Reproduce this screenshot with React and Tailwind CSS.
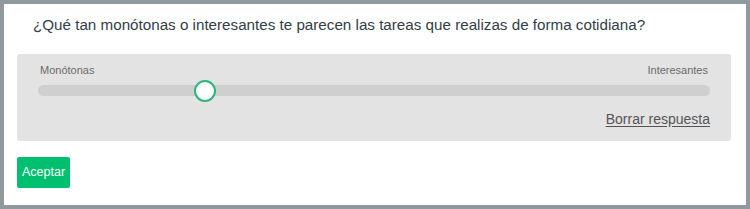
export default function App() {
  const value = 24.8;
  return (
    <div className="h-[209px] w-[750px] bg-[#8f999e] p-[4px]" style={{ fontFamily: '"Liberation Sans", Arial, sans-serif' }}>
      <div className="h-full w-full bg-white pl-[13px] pr-[15px] pt-[9px]">
        <h2 className="pl-[16px] text-[15.2px] leading-[24px] text-[#333e48]">
          ¿Qué tan monótonas o interesantes te parecen las tareas que realizas de forma cotidiana?
        </h2>

        <div className="mt-[17px] h-[87px] rounded-[3px] bg-[#e3e3e3] px-[21px] pt-[8px]">
          <div className="flex justify-between px-[2px] text-[11px] leading-[16px] text-[#6b6b6b]">
            <span>Monótonas</span>
            <span>Interesantes</span>
          </div>

          {/* Slider */}
          <div className="relative mt-[7px] h-[11px] rounded-full bg-[#cfcfcf]">
            <div
              className="absolute top-1/2 h-[22px] w-[22px] -translate-x-1/2 -translate-y-1/2 rounded-full border-2 border-[#2fb67b] bg-white"
              style={{ left: `${value}%` }}
            />
          </div>

          <div className="mt-[14px] flex justify-end">
            <a className="text-[14px] leading-[18px] text-[#555] underline underline-offset-2" href="#">
              Borrar respuesta
            </a>
          </div>
        </div>

        <button className="mt-[16px] h-[31px] rounded-[2px] bg-[#00bf6f] px-[5px] text-[12.5px] text-white">
          Aceptar
        </button>
      </div>
    </div>
  );
}
